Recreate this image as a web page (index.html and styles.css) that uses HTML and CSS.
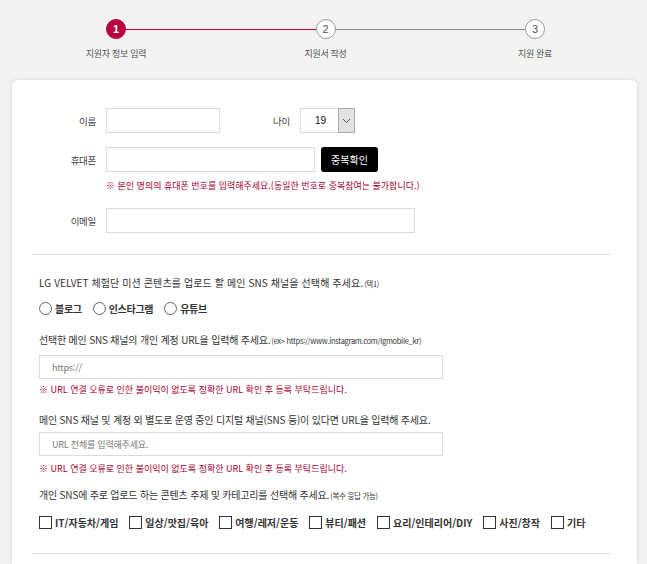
FILE: index.html
```html
<!DOCTYPE html>
<html lang="ko">
<head>
<meta charset="utf-8">
<title>지원자 정보 입력</title>
<link rel="stylesheet" href="styles.css">
</head>
<body>
<div class="page">
  <div class="steps">
    <div class="step active"><span class="num">1</span><span class="txt">지원자 정보 입력</span></div>
    <div class="bar active"></div>
    <div class="step"><span class="num">2</span><span class="txt">지원서 작성</span></div>
    <div class="bar"></div>
    <div class="step"><span class="num">3</span><span class="txt">지원 완료</span></div>
  </div>

  <div class="card">
    <div class="basic">
      <div class="row">
        <span class="lbl">이름</span>
        <span class="inp inp-name"></span>
        <span class="lbl lbl-age">나이</span>
        <span class="select"><span class="val">19</span><span class="arrow"><svg width="9" height="6" viewBox="0 0 9 6"><path d="M1 1 L4.5 4.5 L8 1" fill="none" stroke="#555" stroke-width="1"/></svg></span></span>
      </div>
      <div class="row row-phone">
        <span class="lbl">휴대폰</span>
        <span class="inp inp-phone"></span>
        <span class="btn">중복확인</span>
      </div>
      <p class="warn warn-phone">※ 본인 명의의 휴대폰 번호를 입력해주세요.(동일한 번호로 중복참여는 불가합니다.)</p>
      <div class="row row-email">
        <span class="lbl">이메일</span>
        <span class="inp inp-email"></span>
      </div>
    </div>

    <div class="divider divider-top"></div>

    <div class="sns">
      <p class="q q1">LG VELVET 체험단 미션 콘텐츠를 업로드 할 메인 SNS 채널을 선택해 주세요.<small>(택1)</small></p>
      <div class="radios">
        <span class="opt"><span class="radio"></span>블로그</span>
        <span class="opt"><span class="radio"></span>인스타그램</span>
        <span class="opt"><span class="radio"></span>유튜브</span>
      </div>

      <p class="q q2">선택한 메인 SNS 채널의 개인 계정 URL을 입력해 주세요.<small>(ex&gt; https://www.instagram.com/lgmobile_kr)</small></p>
      <div class="inp inp-wide"><span class="ph">https://</span></div>
      <p class="warn warn-url">※ URL 연결 오류로 인한 불이익이 없도록 정확한 URL 확인 후 등록 부탁드립니다.</p>

      <p class="q q3">메인 SNS 채널 및 계정 외 별도로 운영 중인 디지털 채널(SNS 등)이 있다면 URL을 입력해 주세요.</p>
      <div class="inp inp-wide"><span class="ph">URL 전체를 입력해주세요.</span></div>
      <p class="warn warn-url2">※ URL 연결 오류로 인한 불이익이 없도록 정확한 URL 확인 후 등록 부탁드립니다.</p>

      <p class="q q4">개인 SNS에 주로 업로드 하는 콘텐츠 주제 및 카테고리를 선택해 주세요.<small>(복수 응답 가능)</small></p>
      <div class="checks">
        <span class="chk"><span class="box"></span>IT/자동차/게임</span>
        <span class="chk"><span class="box"></span>일상/맛집/육아</span>
        <span class="chk"><span class="box"></span>여행/레저/운동</span>
        <span class="chk"><span class="box"></span>뷰티/패션</span>
        <span class="chk"><span class="box"></span>요리/인테리어/DIY</span>
        <span class="chk"><span class="box"></span>사진/창작</span>
        <span class="chk"><span class="box"></span>기타</span>
      </div>
    </div>

    <div class="divider divider-bottom"></div>
  </div>
</div>
</body>
</html>
```

FILE: styles.css
```css
* { box-sizing: border-box; }
html, body { margin: 0; padding: 0; }
body {
  background: #f2f2f2;
  font-family: "Noto Sans CJK KR", "Noto Sans", "Liberation Sans", sans-serif;
  color: #333;
  height: 564px;
  overflow: hidden;
}
p { margin: 0; }

/* steps */
.steps {
  display: flex;
  padding: 19px 102px 0 106px;
}
.step {
  width: 20px;
  display: flex;
  flex-direction: column;
  align-items: center;
}
.num {
  width: 20px;
  height: 20px;
  border-radius: 50%;
  border: 1px solid #999;
  background: #fff;
  color: #555;
  font-size: 11px;
  line-height: 18px;
  text-align: center;
  font-family: "Liberation Sans", sans-serif;
}
.step.active .num {
  background: #b8003e;
  border-color: #b8003e;
  color: #fff;
  font-weight: bold;
}
.txt {
  margin-top: 8px;
  white-space: nowrap;
  font-size: 9px;
  letter-spacing: -0.3px;
  line-height: 13px;
  color: #555;
}
.bar {
  flex: 1;
  height: 1px;
  margin-top: 10px;
  background: #888;
}
.bar.active { background: #b8003e; }

/* card */
.card {
  margin: 20px 10px 0 12px;
  background: #fff;
  border-radius: 6px 6px 0 0;
  box-shadow: 0 0 4px rgba(0,0,0,0.12);
  padding: 28px 27px 10px 20px;
}

.row {
  display: flex;
  align-items: center;
  height: 25px;
}
.row-phone { margin-top: 14px; }
.row-email { margin-top: 15px; }
.lbl {
  width: 64px;
  margin-right: 10px;
  text-align: right;
  font-size: 9.5px;
  letter-spacing: -0.3px;
  color: #444;
}
.lbl-age { width: 70px; }
.inp {
  display: block;
  height: 25px;
  border: 1px solid #dcdcdc;
  background: #fff;
}
.inp-name { width: 114px; }
.inp-phone { width: 209px; }
.inp-email { width: 309px; }
.select {
  display: flex;
  width: 55px;
  height: 25px;
  border: 1px solid #dcdcdc;
  align-items: stretch;
}
.val {
  flex: 1;
  padding-left: 14px;
  font-size: 10px;
  line-height: 23px;
  color: #111;
  font-family: "Liberation Sans", sans-serif;
}
.arrow {
  width: 17px;
  margin: -1px -1px -1px 0;
  border: 1px solid #aaa;
  background: #e2e2e2;
  display: flex;
  align-items: center;
  justify-content: center;
}
.btn {
  margin-left: 6px;
  width: 57px;
  height: 25px;
  background: #000;
  color: #fff;
  border-radius: 3px;
  font-size: 10px;
  line-height: 25px;
  text-align: center;
}
.warn {
  font-size: 9px;
  letter-spacing: 0;
  line-height: 14px;
  color: #a50034;
}
.warn-phone { margin: 7px 0 0 74px; }

.divider {
  height: 1px;
  background: #ddd;
}
.divider-top { margin-top: 21px; }
.divider-bottom { margin-top: 23px; }

.sns { padding-left: 7px; }
.q {
  font-size: 10px;
  letter-spacing: -0.2px;
  line-height: 16px;
  color: #333;
}
.q1 { letter-spacing: 0.1px; }
.q small {
  font-size: 7.5px;
  letter-spacing: -0.3px;
  margin-left: 1px;
}
.q1 { margin-top: 20px; }
.q2 { margin-top: 16px; }
.q3 { margin-top: 15px; }
.q4 { margin-top: 11px; }

.radios {
  margin-top: 8px;
  display: flex;
  gap: 11px;
  height: 16px;
  align-items: center;
}
.opt, .chk {
  display: flex;
  align-items: center;
  gap: 3px;
  font-size: 10px;
  letter-spacing: -0.3px;
  font-weight: bold;
  color: #333;
  white-space: nowrap;
}
.radio {
  width: 13px;
  height: 13px;
  border-radius: 50%;
  border: 1px solid #666;
  background: #fff;
}
.inp-wide {
  width: 404px;
  height: 24px;
  margin-top: 6px;
  display: flex;
  align-items: center;
  padding-left: 12px;
}
.q3 + .inp-wide { margin-top: 4px; }
.ph {
  font-size: 9px;
  letter-spacing: -0.2px;
  color: #777;
}
.warn-url { margin-top: 4px; }
.warn-url2 { margin-top: 6px; }

.checks {
  margin-top: 10px;
  display: flex;
  gap: 11px;
  height: 16px;
  align-items: center;
}
.chk { letter-spacing: 0; }
.box {
  width: 13px;
  height: 13px;
  border: 1px solid #333;
  background: #fff;
}
```
